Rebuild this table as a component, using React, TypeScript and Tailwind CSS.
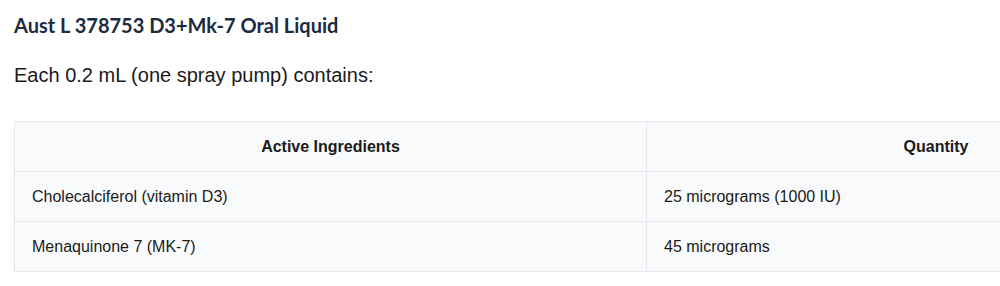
import React from 'react';

const rows = [
  { name: 'Cholecalciferol (vitamin D3)', qty: '25 micrograms (1000 IU)' },
  { name: 'Menaquinone 7 (MK-7)', qty: '45 micrograms' },
];

export default function App() {
  return (
    <div className="w-[1000px] h-[286px] overflow-hidden bg-white">
      <div className="pl-[14px] pt-[13px]">
        <h2 className="font-['Lato',sans-serif] font-bold text-[20px] leading-[24px] text-[#1c2b3f]">
          Aust L 378753 D3+Mk-7 Oral Liquid
        </h2>
        <p className="mt-[26px] font-['Liberation_Sans',Arial,sans-serif] text-[20px] leading-[24px] text-[#1a1a1a]">
          Each 0.2 mL (one spray pump) contains:
        </p>
        <table className="mt-[34px] w-[1212px] border-collapse bg-[#f9fafb] font-['Liberation_Sans',Arial,sans-serif] text-[16px] text-[#1a1a1a]">
          <thead>
            <tr className="h-[50px]">
              <th className="w-[632px] border border-[#e5e8ec] font-bold text-center">Active Ingredients</th>
              <th className="border border-[#e5e8ec] font-bold text-center">Quantity</th>
            </tr>
          </thead>
          <tbody>
            {rows.map((r) => (
              <tr key={r.name} className="h-[50px]">
                <td className="border border-[#e5e8ec] px-[17px]">{r.name}</td>
                <td className="border border-[#e5e8ec] px-[17px]">{r.qty}</td>
              </tr>
            ))}
          </tbody>
        </table>
      </div>
    </div>
  );
}
